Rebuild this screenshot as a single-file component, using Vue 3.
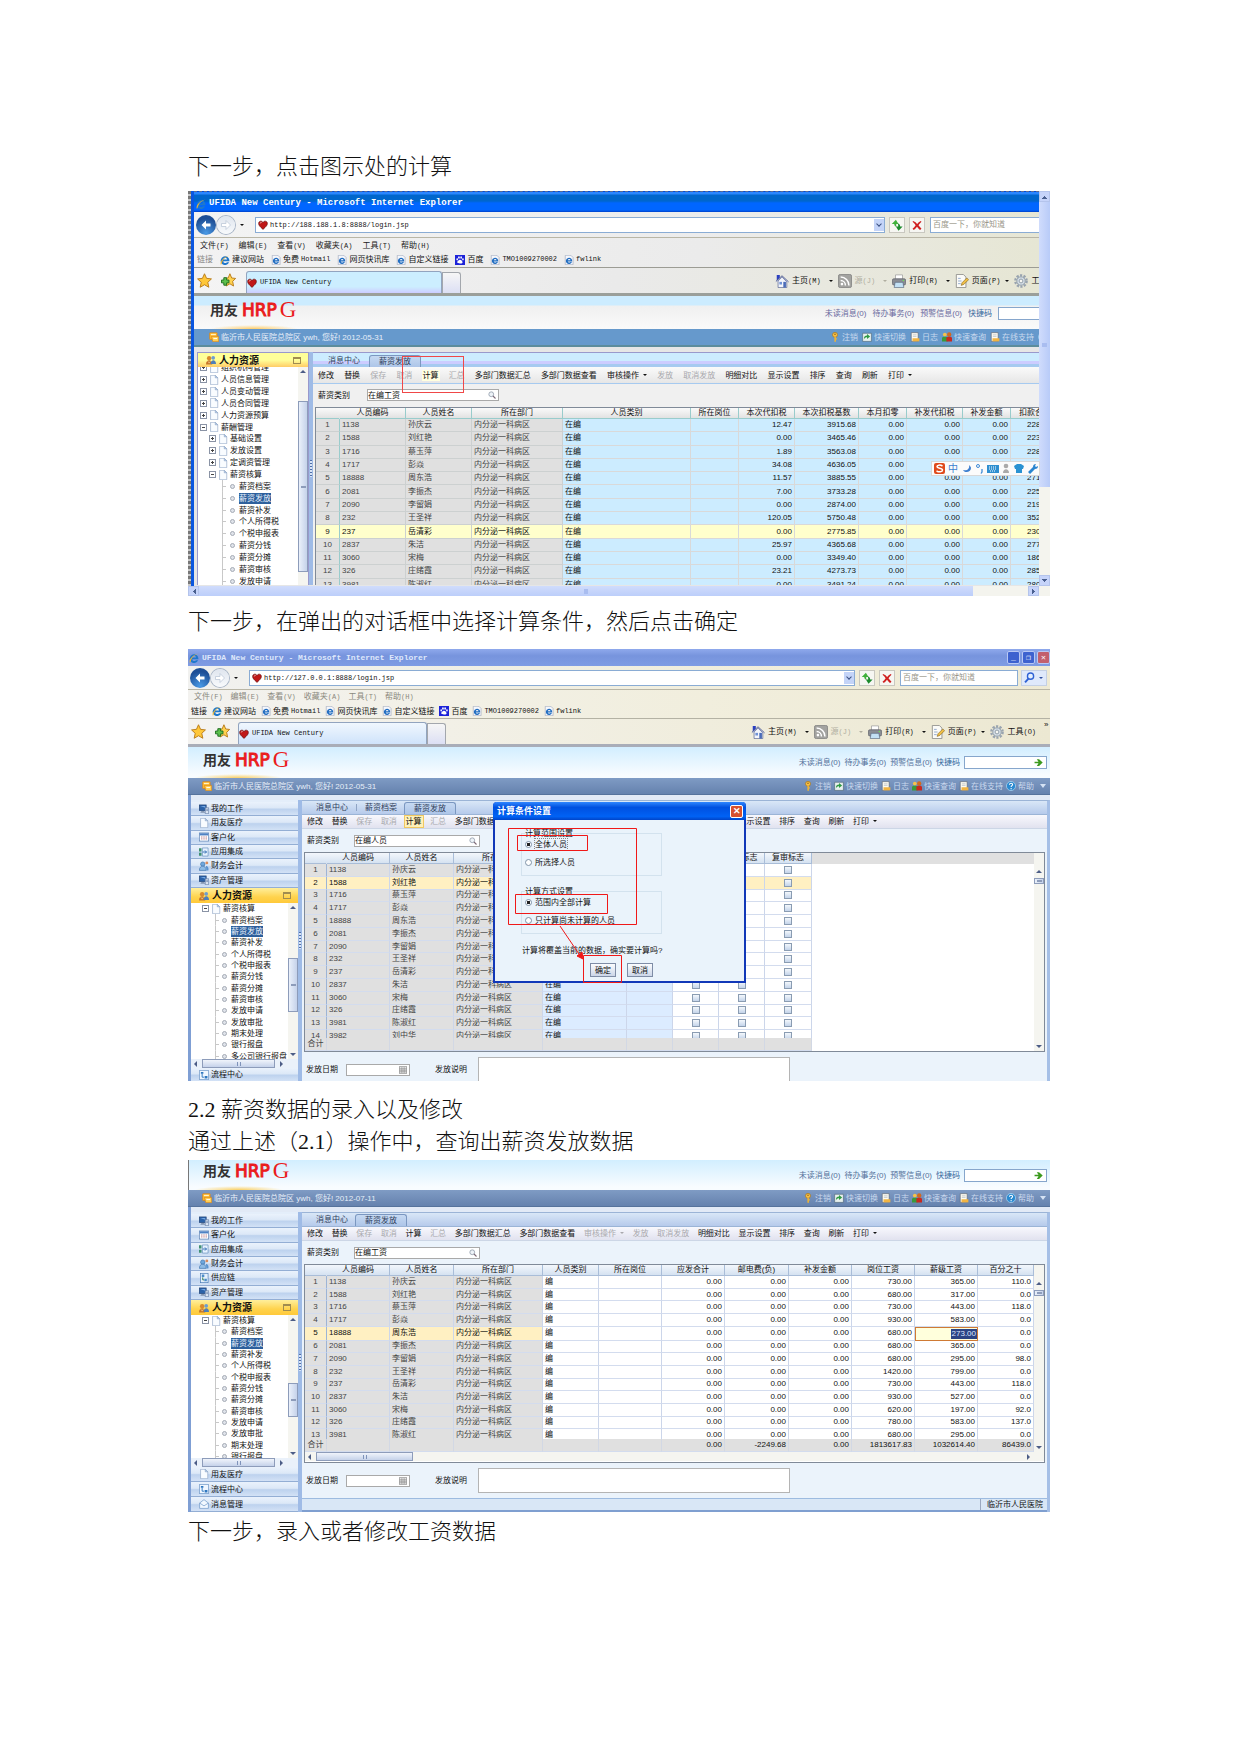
<script setup>
// Halaman panduan penggajian: teks langkah + tiga layar sistem HRP
const menus = [
  ["文件", "F"],
  ["编辑", "E"],
  ["查看", "V"],
  ["收藏夹", "A"],
  ["工具", "T"],
  ["帮助", "H"],
];
const favorites = [
  { icon: "ie", text: "建议网站" },
  { icon: "iepage", text: "免费", latin: "Hotmail" },
  { icon: "iepage", text: "网页快讯库" },
  { icon: "iepage", text: "自定义链接" },
  { icon: "paw", text: "百度" },
  { icon: "iepage", latin: "TMO1009270002" },
  { icon: "iepage", latin: "fwlink" },
];
const commands = [
  { icon: "home", text: "主页", key: "M" },
  { icon: "rss", text: "源", key: "J", off: true },
  { icon: "printer", text: "打印", key: "R" },
  { icon: "pageedit", text: "页面", key: "P", tight: true },
  { icon: "gear", text: "工具", key: "O", tight: true },
];
const statusLinks = [
  { icon: "key", text: "注销" },
  { icon: "switch", text: "快速切换" },
  { icon: "log", text: "日志" },
  { icon: "users", text: "快速查询" },
  { icon: "log", text: "在线支持" },
  { icon: "help", text: "帮助" },
];
const notices = ["未读消息(0)", "待办事务(0)", "预警信息(0)"];

const tools = (off, hot) =>
  [
    "修改", "替换", "保存", "取消", "计算", "汇总", "多部门数据汇总", "多部门数据查看",
    "审核操作", "发放", "取消发放", "明细对比", "显示设置", "排序", "查询", "刷新", "打印",
  ].map((text) => ({
    text,
    off: off.includes(text),
    hot: hot === text,
    drop: text === "审核操作" || text === "打印",
  }));

const people = [
  ["1138", "孙庆云"],
  ["1588", "刘红艳"],
  ["1716", "蔡玉萍"],
  ["1717", "彭焱"],
  ["18888", "周东浩"],
  ["2081", "李振杰"],
  ["2090", "李留娟"],
  ["232", "王圣祥"],
  ["237", "岳清彩"],
  ["2837", "朱洁"],
  ["3060", "宋梅"],
  ["326", "庄绪霞"],
  ["3981", "陈淑红"],
  ["3982", "刘中华"],
];
const makeRows = (n, extra) =>
  people.slice(0, n).map((p, i) => [String(i + 1), p[0], p[1], "内分泌一科病区", ...extra(i)]);

const col = (title, width, type = "text") => ({ title, width, type });

const tax = [
  ["12.47", "3915.68", "228"],
  ["0.00", "3465.46", "223"],
  ["1.89", "3563.08", "228"],
  ["34.08", "4636.05", "228"],
  ["11.57", "3885.55", "271"],
  ["7.00", "3733.28", "225"],
  ["0.00", "2874.00", "219"],
  ["120.05", "5750.48", "352"],
  ["0.00", "2775.85", "230"],
  ["25.97", "4365.68", "277"],
  ["0.00", "3349.40", "186"],
  ["23.21", "4273.73", "285"],
  ["0.00", "3491.24", "280"],
];
const pay = [
  ["730.00", "365.00", "110.0"],
  ["680.00", "317.00", "0.0"],
  ["730.00", "443.00", "118.0"],
  ["930.00", "583.00", "0.0"],
  ["680.00", "273.00", "0.0"],
  ["680.00", "365.00", "0.0"],
  ["680.00", "295.00", "98.0"],
  ["1420.00", "799.00", "0.0"],
  ["730.00", "443.00", "118.0"],
  ["930.00", "527.00", "0.0"],
  ["620.00", "197.00", "92.0"],
  ["780.00", "583.00", "137.0"],
  ["680.00", "295.00", "0.0"],
];

const leaves = [
  "薪资档案", "薪资发放", "薪资补发", "个人所得税", "个税申报表", "薪资分钱",
  "薪资分摊", "薪资审核", "发放申请", "发放审批", "期末处理", "银行报盘", "多公司银行报盘",
];
const leafNodes = (n) => leaves.slice(0, n).map((text) => ({ text, level: 3 }));

const shots = [
  {
    id: "classic",
    captions: ["下一步，点击图示处的计算"],
    browser: true,
    url: "http://188.188.1.8:8888/login.jsp",
    date: "2012-05-31",
    modules: [],
    bottomModules: [],
    tree: [
      { text: "组织机构管理", level: 1, sign: "+" },
      { text: "人员信息管理", level: 1, sign: "+" },
      { text: "人员变动管理", level: 1, sign: "+" },
      { text: "人员合同管理", level: 1, sign: "+" },
      { text: "人力资源预算", level: 1, sign: "+" },
      { text: "薪酬管理", level: 1, sign: "-" },
      { text: "基础设置", level: 2, sign: "+" },
      { text: "发放设置", level: 2, sign: "+" },
      { text: "定调资管理", level: 2, sign: "+" },
      { text: "薪资核算", level: 2, sign: "-" },
      ...leafNodes(9),
    ],
    thumb: { marginTop: "28px", height: "171px" },
    tabs: ["消息中心"],
    tools: tools(["保存", "取消", "汇总", "发放", "取消发放"], "计算"),
    filter: "在编工资",
    columns: [
      col("", 24, "no"), col("人员编码", 66, "fix"), col("人员姓名", 66, "fix"), col("所在部门", 91, "fix"),
      col("人员类别", 128), col("所在岗位", 48), col("本次代扣税", 56, "num"), col("本次扣税基数", 64, "num"),
      col("本月扣零", 48, "num"), col("补发代扣税", 56, "num"), col("补发金额", 48, "num"), col("扣款合计", 0, "cut"),
    ],
    rows: makeRows(13, (i) => ["在编", "", tax[i][0], tax[i][1], "0.00", "0.00", "0.00", tax[i][2]]),
    active: 8,
  },
  {
    id: "dialogued",
    captions: ["下一步，在弹出的对话框中选择计算条件，然后点击确定"],
    browser: true,
    url: "http://127.0.0.1:8888/login.jsp",
    date: "2012-05-31",
    modules: [
      ["pc", "我的工作"], ["doc", "用友医疗"], ["sheet", "客户化"],
      ["module", "应用集成"], ["money", "财务会计"], ["pc", "资产管理"],
    ],
    bottomModules: [["flow", "流程中心"]],
    tree: [{ text: "薪资核算", level: 2, sign: "-" }, ...leafNodes(13)],
    thumb: { marginTop: "49px", height: "54px" },
    tabs: ["消息中心", "薪资档案"],
    tools: tools(["保存", "取消", "汇总"], "计算"),
    filter: "在编人员",
    columns: [
      col("", 22, "no"), col("人员编码", 63, "fix"), col("人员姓名", 64, "fix"), col("所在部门", 89, "fix"),
      col("人员类别", 84, "blue"), col("所在岗位", 46, "blue"), col("发放标志", 46, "check"), col("审核标志", 46, "check"),
      col("复审标志", 47, "check"), col("", 0, "filler"),
    ],
    rows: makeRows(14, () => ["在编", "", "", "", "", ""]),
    active: 1,
    total: ["合计"],
    form: true,
    gridThumb: true,
    dialog: true,
  },
  {
    id: "editing",
    captions: ["2.2 薪资数据的录入以及修改", "通过上述（2.1）操作中，查询出薪资发放数据"],
    date: "2012-07-11",
    modules: [
      ["pc", "我的工作"], ["sheet", "客户化"], ["module", "应用集成"],
      ["money", "财务会计"], ["supply", "供应链"], ["pc", "资产管理"],
    ],
    bottomModules: [["doc", "用友医疗"], ["flow", "流程中心"], ["mail", "消息管理"]],
    tree: [{ text: "薪资核算", level: 2, sign: "-" }, ...leafNodes(12)],
    thumb: { marginTop: "62px", height: "34px" },
    tabs: ["消息中心"],
    tools: tools(["保存", "取消", "汇总", "审核操作", "发放", "取消发放"], ""),
    filter: "在编工资",
    columns: [
      col("", 22, "no"), col("人员编码", 63, "fix"), col("人员姓名", 64, "fix"), col("所在部门", 89, "fix"),
      col("人员类别", 56), col("所在岗位", 63), col("应发合计", 63, "num"), col("邮电费(负)", 64, "num"),
      col("补发金额", 63, "num"), col("岗位工资", 63, "num"), col("薪级工资", 63, "num"), col("百分之十", 0, "num"),
    ],
    rows: makeRows(13, (i) => ["编", "", "0.00", "0.00", "0.00", ...pay[i]]),
    active: 4,
    editCell: [4, 10],
    total: ["合计", "", "", "", "", "", "0.00", "-2249.68", "0.00", "1813617.83", "1032614.40", "86439.0"],
    form: true,
    gridThumb: true,
    hscroll: true,
    footer: "临沂市人民医院",
  },
];

const colStyle = (c) => (c.width ? { width: c.width + "px" } : {});
const isEdit = (shot, r, c) => shot.editCell && shot.editCell[0] === r && shot.editCell[1] === c;
</script>

<template>
  <svg class="sprite" aria-hidden="true">
    <symbol id="i-ie" viewBox="0 0 16 16">
      <path d="M15 10H5.200a3.200 3.200 0 0 0 5.800 1.600h3.600a7 7 0 1 1 .4-1.600zM5.300 7.200h6a3 3 0 0 0-6 0z" fill="#1f78cc" />
      <path d="M1.500 15.500C-1 12 5 3 15.500.8 13 1.500 6 4.500 3.200 11.500c-.7 1.700-.5 3-1.700 4z" fill="#f2b632" />
    </symbol>
    <symbol id="i-iepage" viewBox="0 0 16 16">
      <path d="M2 .5h9l3.500 3.500v11.500H2z" fill="#f4f6fb" stroke="#9aa4b8" />
      <path d="M13 10.200H6a2.600 2.600 0 0 0 4.400 1.100h2.300a5 5 0 1 1 .3-1.100zM6 8.200h4.500a2.300 2.300 0 0 0-4.500 0z" fill="#1f6cc0" />
    </symbol>
    <symbol id="i-heart" viewBox="0 0 16 16">
      <path d="M8 15C3 10.500 1 8.500 1 5.500 1 1.500 6 .5 8 4c2-3.500 7-2.500 7 1.500 0 3-2 5-7 9.500z" fill="#c01818" stroke="#5c0808" />
      <path d="M3.500 5.500c0-1.500 1.500-2 2.500-1.500" stroke="#fff" fill="none" />
    </symbol>
    <symbol id="i-paw" viewBox="0 0 16 16">
      <rect width="16" height="16" fill="#1c22d8" />
      <path d="M8 7.500c2 0 4.500 3 4 5s-6 1-8 0 2-5 4-5z" fill="#fff" />
      <ellipse cx="3.500" cy="7" rx="1.300" ry="1.800" fill="#fff" />
      <ellipse cx="6.300" cy="4" rx="1.300" ry="2" fill="#fff" />
      <ellipse cx="9.800" cy="4" rx="1.300" ry="2" fill="#fff" />
      <ellipse cx="12.700" cy="7" rx="1.300" ry="1.800" fill="#fff" />
    </symbol>
    <symbol id="i-star" viewBox="0 0 16 16">
      <path d="M8 .8l2.200 4.900 5.200.6-3.900 3.600 1.100 5.300L8 12.500l-4.600 2.700 1.100-5.300L.6 6.300l5.200-.6z" fill="#ffc739" stroke="#b97b18" />
    </symbol>
    <symbol id="i-staradd" viewBox="0 0 16 16">
      <path d="M9.500.8l1.900 4.500 4.200.5-3.200 3.100 1 5-3.900-2.400-4.100 2.400 1-5L3.200 5.800l4.400-.5z" fill="#ffd24f" stroke="#b97b18" />
      <path d="M3 5h3v2.500h2.500v3H6V13H3v-2.500H.5v-3H3z" fill="#5cc04c" stroke="#1e6e20" />
    </symbol>
    <symbol id="i-refresh" viewBox="0 0 16 16">
      <path d="M6.500 1L1 6.500h3.200C4.500 8.500 5.500 10 7.500 10 6.500 8.500 7 7.500 7 6.500h3z" fill="#3fb13a" />
      <path d="M10 15.500l5.500-5.500h-3.200c-.3-2.500-1.300-4-3.500-4 1 1.500.8 2.500.8 4H6.500z" fill="#1c8a2c" />
    </symbol>
    <symbol id="i-stop" viewBox="0 0 16 16">
      <path d="M3 2.500c2.500 1 4 2.500 5.200 4C9.500 5 11 3.500 13 2.500l1 1c-1.700 1.500-3 3-4 4.800 1.300 1.700 2.500 3.200 4 4.700L12 14.500c-1.500-1.200-2.800-2.600-4-4.200-1.200 1.600-2.500 3-4.200 4.200L2 13c1.700-1.500 3-3 4.200-4.800C5 6.500 3.600 5 2 3.800z" fill="#cf1f1f" />
    </symbol>
    <symbol id="i-home" viewBox="0 0 16 16">
      <path d="M2 1h3.500v4.500L2 8z" fill="#2b3fc0" />
      <path d="M1 8.500L8 2l7.500 7" fill="#cfd8f4" stroke="#4a5686" />
      <path d="M3.500 8L8 3.500 13.500 9v6.500h-10z" fill="#f3f5fb" stroke="#54618f" stroke-width=".8" />
      <rect x="5" y="9" width="3" height="3" fill="#6f92d6" />
      <rect x="9.500" y="9" width="3" height="6.500" fill="#4b6cb8" />
    </symbol>
    <symbol id="i-rss" viewBox="0 0 16 16">
      <rect x=".5" y=".5" width="15" height="15" rx="2" fill="#a3a3a0" stroke="#858583" />
      <circle cx="4.500" cy="11.500" r="1.500" fill="#fff" />
      <path d="M3 7.500a5.500 5.500 0 0 1 5.500 5.500M3 3.500a9.500 9.500 0 0 1 9.500 9.500" fill="none" stroke="#fff" stroke-width="1.700" />
    </symbol>
    <symbol id="i-printer" viewBox="0 0 16 16">
      <path d="M4 1h8v5H4z" fill="#fff" stroke="#999" stroke-width=".8" />
      <rect x=".5" y="5.500" width="15" height="7" rx="1.500" fill="#8a8d94" stroke="#5c5f67" stroke-width=".8" />
      <path d="M3.500 9.500h9l1 6h-11z" fill="#c2e0f4" stroke="#5a6a80" stroke-width=".8" />
      <circle cx="13" cy="7.500" r=".9" fill="#6ddc58" />
    </symbol>
    <symbol id="i-pageedit" viewBox="0 0 16 16">
      <path d="M1.500.5h8l3 3v12h-11z" fill="#fbfbf8" stroke="#8e8e8a" />
      <path d="M3.500 5h3M3.500 8h4M3.500 11h3" stroke="#8aa2c8" />
      <path d="M7 13l1-3 5.500-5.500 2 2L10 12z" fill="#f0bf45" stroke="#866420" stroke-width=".7" />
    </symbol>
    <symbol id="i-gear" viewBox="0 0 16 16">
      <circle cx="8" cy="8" r="6.500" fill="none" stroke="#98a3af" stroke-width="2.600" stroke-dasharray="2.500 1.600" />
      <circle cx="8" cy="8" r="4.800" fill="#d7e0e8" stroke="#8492a0" />
      <circle cx="8" cy="8" r="2.200" fill="#f7f7f2" stroke="#8492a0" />
    </symbol>
    <symbol id="i-note" viewBox="0 0 16 16">
      <rect x="1" y="1" width="12" height="11" rx="1" fill="#ffb92e" stroke="#d97f12" />
      <path d="M4 7h11.500v8.500H6z" fill="#ffcf56" stroke="#d97f12" />
      <path d="M3 4h8" stroke="#fff3c8" stroke-width="2" />
      <path d="M7 10.500h6" stroke="#fff" stroke-width="1.500" />
    </symbol>
    <symbol id="i-key" viewBox="0 0 16 16">
      <circle cx="8" cy="4.500" r="4" fill="#f7c148" stroke="#a36f12" />
      <circle cx="8" cy="3.500" r="1.200" fill="#8a5c10" />
      <path d="M7 8h2.500v2H11v2H9.500v3L8 16l-1-1z" fill="#eeb437" />
    </symbol>
    <symbol id="i-switch" viewBox="0 0 16 16">
      <path d="M1 2h14v13H1z" fill="#e9f1ee" stroke="#4c6474" />
      <path d="M3 12c0-5 2-6.500 5-6.500V3l5 4-5 4V8.500C6 8.500 4.500 9 3 12z" fill="#2f9a44" />
    </symbol>
    <symbol id="i-log" viewBox="0 0 16 16">
      <path d="M2 1h11v14H2z" fill="#fdfbf0" stroke="#5d6470" />
      <path d="M4.500 4.500h6M4.500 7h6" stroke="#a9b2bf" />
      <path d="M4 10h11v5H4z" fill="#f1b443" />
    </symbol>
    <symbol id="i-users" viewBox="0 0 16 16">
      <circle cx="4.500" cy="4" r="3" fill="#f7c24a" />
      <path d="M0 15V10c0-3 9-3 9 0v5z" fill="#3a9a3a" />
      <circle cx="11.500" cy="4" r="3.500" fill="#d2691e" />
      <path d="M7 15v-5c0-3 9-3 9 0v5z" fill="#c8281e" />
    </symbol>
    <symbol id="i-help" viewBox="0 0 16 16">
      <circle cx="8" cy="8" r="7.300" fill="#2b8ad0" stroke="#bfe3fa" />
      <path d="M5.500 6c0-3.500 5.500-3 5 0-.2 1.500-2.300 1.500-2.300 3.500" fill="none" stroke="#fff" stroke-width="1.700" />
      <circle cx="8.200" cy="12.200" r="1.100" fill="#fff" />
    </symbol>
    <symbol id="i-lens" viewBox="0 0 16 16">
      <circle cx="6.500" cy="6.500" r="4.800" fill="#eef3f8" stroke="#8b95a5" stroke-width="1.500" />
      <path d="M10 10l5 5" stroke="#7d6a78" stroke-width="2.200" />
    </symbol>
    <symbol id="i-bluelens" viewBox="0 0 16 16">
      <circle cx="9.500" cy="6" r="4.500" fill="#e4f0ff" stroke="#2f62d4" stroke-width="2" />
      <path d="M6.500 9.500L1.500 15" stroke="#2f62d4" stroke-width="2.800" />
    </symbol>
    <symbol id="i-doc" viewBox="0 0 16 16">
      <path d="M2.500.5h7.500l4 4v11H2.500z" fill="#f9fcff" stroke="#8ba2c3" />
      <path d="M10 .5v4h4z" fill="#bcd2ee" stroke="#8ba2c3" />
    </symbol>
    <symbol id="i-sheet" viewBox="0 0 16 16">
      <rect x=".5" y="1.500" width="15" height="13" fill="#fff" stroke="#4f77ad" />
      <path d="M1 2h14v3.500H1z" fill="#4f82c4" />
      <path d="M4.500 7v6M8 7v6M11.500 7v6" stroke="#b06a76" stroke-width="1.500" stroke-dasharray="2 1" />
    </symbol>
    <symbol id="i-pc" viewBox="0 0 16 16">
      <rect x=".5" y="1.500" width="11" height="9" fill="#2b62a8" stroke="#1c3d70" />
      <path d="M2 3h8v3z" fill="#74a8e4" />
      <path d="M4 11h4l2 3H2z" fill="#8496b0" />
      <path d="M10 6h5.500v9.500H10z" fill="#dce6f3" stroke="#57709a" />
      <path d="M11.500 8.500h3M11.500 10.500h3" stroke="#57709a" />
    </symbol>
    <symbol id="i-module" viewBox="0 0 16 16">
      <path d="M5.500 1.500h9v13h-9z" fill="#e6f2ff" stroke="#5d88b8" />
      <path d="M0 2h4v5H0zM0 9h4v5H0z" fill="#3f8f72" />
      <path d="M6 8h6M9.500 5.500L12 8l-2.500 2.500" stroke="#2d6ab0" fill="none" stroke-width="1.500" />
    </symbol>
    <symbol id="i-money" viewBox="0 0 16 16">
      <circle cx="6" cy="5" r="3.500" fill="#6fa7dc" stroke="#3c70a8" />
      <path d="M.5 15c0-9 11-9 11 0z" fill="#8dbbe6" stroke="#3c70a8" />
      <circle cx="12.500" cy="3" r="2.300" fill="#d98b5c" />
      <path d="M11 8c3-1 5 3 4 7h-3z" fill="#5a93cf" />
    </symbol>
    <symbol id="i-staff" viewBox="0 0 16 16">
      <circle cx="5" cy="5" r="3.500" fill="#d98a2c" />
      <path d="M0 15c0-9 10-9 10 0z" fill="#c67428" />
      <circle cx="11.500" cy="4.500" r="3" fill="#6d9dd0" />
      <path d="M7.500 14.500c0-8 8.500-8 8.500 0z" fill="#4f7fb8" />
      <path d="M3 10l2 3 2-3" stroke="#f6dca0" fill="none" />
    </symbol>
    <symbol id="i-supply" viewBox="0 0 16 16">
      <rect x="2.500" y=".5" width="12" height="15" fill="#e4f0fc" stroke="#3f74b0" />
      <path d="M4.500 2.500h4v4h-4zM8.500 9h4v4h-4z" fill="#4c8cc8" />
      <path d="M6 7v4h2" stroke="#2e7a4c" fill="none" stroke-width="1.500" />
    </symbol>
    <symbol id="i-flow" viewBox="0 0 16 16">
      <rect x=".5" y=".5" width="15" height="15" rx="1" fill="#f0f7ff" stroke="#3f74b0" />
      <path d="M3 3h4v3H3zM9 9.500h4.500v4H9z" fill="#2f78c0" />
      <path d="M5 6v5.500h3" stroke="#2f78c0" fill="none" stroke-width="1.500" />
    </symbol>
    <symbol id="i-mail" viewBox="0 0 16 16">
      <path d="M1 6.500L8 1l7 5.500V15H1z" fill="#f2f8ff" stroke="#5e8cc0" />
      <path d="M1 6.500L8 11l7-4.500" fill="none" stroke="#5e8cc0" />
    </symbol>
    <symbol id="i-calendar" viewBox="0 0 16 16">
      <rect x=".5" y="1.500" width="15" height="13" fill="#f4f4f4" stroke="#666" />
      <path d="M1 5.500h14M1 8.500h14M1 11.500h14M4.500 2v12M8 2v12M11.500 2v12" stroke="#777" />
    </symbol>
    <symbol id="i-go" viewBox="0 0 16 16">
      <path d="M1 6.500h7L5 2h4l6.500 6L9 14H5l3-4.500H1z" fill="#3c9a1e" />
    </symbol>
  </svg>

  <article class="page">
    <template v-for="shot in shots" :key="shot.id">
      <p v-for="line in shot.captions" :key="line" class="caption">{{ line }}</p>

      <section class="shot" :class="shot.id">
        <div class="window">
          <template v-if="shot.browser">
            <header class="titlebar">
              <svg class="ic"><use href="#i-ie" /></svg>
              <span class="title">UFIDA New Century - Microsoft Internet Explorer</span>
              <span v-if="shot.id === 'dialogued'" class="winbtns">
                <button type="button" aria-label="最小化">_</button>
                <button type="button" aria-label="还原">❐</button>
                <button type="button" class="close" aria-label="关闭">✕</button>
              </span>
            </header>

            <div class="address">
              <button type="button" class="nav back" aria-label="后退">
                <svg viewBox="0 0 16 16"><path d="M8 2L2 8l6 6v-4h6V6H8z" fill="#fff" /></svg>
              </button>
              <button type="button" class="nav fwd" aria-label="前进">
                <svg viewBox="0 0 16 16"><path d="M8 2l6 6-6 6v-4H2V6h6z" fill="#fff" stroke="#b9c5d6" /></svg>
              </button>
              <span class="caret"></span>
              <div class="urlbox">
                <svg class="ic"><use href="#i-heart" /></svg>
                <input type="text" aria-label="地址" :value="shot.url" />
                <button type="button" class="drop" aria-label="展开"><span class="chev"></span></button>
              </div>
              <button type="button" class="sq" aria-label="刷新"><svg><use href="#i-refresh" /></svg></button>
              <button type="button" class="sq" aria-label="停止"><svg><use href="#i-stop" /></svg></button>
              <input class="search" type="text" aria-label="搜索" placeholder="百度一下，你就知道" />
              <span v-if="shot.id === 'dialogued'" class="searchbtns">
                <button type="button" aria-label="搜索"><svg><use href="#i-bluelens" /></svg></button>
                <button type="button" aria-label="搜索选项"><span class="caret"></span></button>
              </span>
            </div>

            <nav class="menus">
              <a v-for="m in menus" :key="m[0]" href="#">{{ m[0] }}<span class="mono">({{ m[1] }})</span></a>
            </nav>
            <nav class="favs">
              <span class="favlabel">链接</span>
              <a v-for="f in favorites" :key="f.text + f.latin" href="#">
                <svg class="ic"><use :href="'#i-' + f.icon" /></svg>
                <span v-if="f.text">{{ f.text }}</span>
                <span v-if="f.latin" class="mono">{{ f.latin }}</span>
              </a>
            </nav>

            <div class="tabrow">
              <svg class="star"><use href="#i-star" /></svg>
              <svg class="star"><use href="#i-staradd" /></svg>
              <div class="ietab">
                <svg class="ic"><use href="#i-heart" /></svg>
                <span class="mono">UFIDA New Century</span>
              </div>
              <div class="newtab"></div>
              <div class="cmds">
                <a v-for="c in commands" :key="c.icon" href="#" :class="{ off: c.off, tight: c.tight }">
                  <svg class="cmdic"><use :href="'#i-' + c.icon" /></svg>
                  <span>{{ c.text }}<span class="mono">({{ c.key }})</span></span>
                  <span class="caret"></span>
                </a>
              </div>
              <span v-if="shot.id === 'dialogued'" class="more">»</span>
            </div>
          </template>

          <div class="brand">
            <div class="logo"><b>用友</b><span class="hrp">HRP</span><span class="g">G</span></div>
            <nav class="notices">
              <a v-for="n in notices" :key="n" href="#">{{ n }}</a>
              <label :for="shot.id + '-code'">快捷码</label>
              <span class="codebox">
                <input :id="shot.id + '-code'" type="text" />
                <svg v-if="shot.id !== 'classic'"><use href="#i-go" /></svg>
              </span>
            </nav>
          </div>

          <div class="status">
            <svg class="ic"><use href="#i-note" /></svg>
            <span>临沂市人民医院总院区 ywh, 您好! {{ shot.date }}</span>
            <nav class="links">
              <a v-for="s in statusLinks" :key="s.text" href="#">
                <svg class="ic"><use :href="'#i-' + s.icon" /></svg>{{ s.text }}
              </a>
              <span class="tri"></span>
            </nav>
          </div>

          <div class="body">
            <aside class="side">
              <div v-if="shot.modules.length" class="modules">
                <a v-for="m in shot.modules" :key="m[1]" href="#" class="module">
                  <svg class="ic"><use :href="'#i-' + m[0]" /></svg>{{ m[1] }}
                </a>
              </div>
              <div class="hr">
                <svg class="ic"><use href="#i-staff" /></svg>
                <b>人力资源</b>
                <span class="winicon"></span>
              </div>
              <div class="treebox">
                <ul class="tree">
                  <li v-for="(t, i) in shot.tree" :key="i" :class="'l' + t.level">
                    <template v-if="t.sign">
                      <span class="sign" :class="{ plus: t.sign === '+' }"></span>
                      <svg class="ic"><use href="#i-doc" /></svg>
                    </template>
                    <i v-else class="dot"></i>
                    <span class="node" :class="{ sel: t.text === '薪资发放' }">{{ t.text }}</span>
                  </li>
                </ul>
                <div class="vs">
                  <i class="up"></i>
                  <span class="thumb" :style="shot.thumb"></span>
                  <i v-if="shot.modules.length" class="down"></i>
                </div>
              </div>
              <div v-if="shot.modules.length" class="hs">
                <i class="left"></i><span class="hthumb"></span><i class="right"></i>
              </div>
              <a v-for="m in shot.bottomModules" :key="m[1]" href="#" class="module low">
                <svg class="ic"><use :href="'#i-' + m[0]" /></svg>{{ m[1] }}
              </a>
            </aside>
            <div class="split"><i></i></div>

            <main class="panel">
              <div class="tabs">
                <template v-for="(t, i) in shot.tabs" :key="t">
                  <span v-if="i" class="bar"></span>
                  <a href="#">{{ t }}</a>
                </template>
                <a href="#" class="on">薪资发放</a>
              </div>
              <div class="toolbar">
                <div class="toolset">
                  <button
                    v-for="t in shot.tools"
                    :key="t.text"
                    type="button"
                    :class="{ off: t.off, hot: t.hot }"
                  >{{ t.text }}<span v-if="t.drop" class="caret"></span></button>
                </div>
              </div>
              <div class="filter">
                <label :for="shot.id + '-cat'">薪资类别</label>
                <span class="lookup">
                  <input :id="shot.id + '-cat'" type="text" :value="shot.filter" />
                  <svg><use href="#i-lens" /></svg>
                </span>
              </div>

              <div class="grid">
                <div class="gridrow">
                  <div class="gridcol">
                    <div class="view">
                      <table class="data">
                        <colgroup><col v-for="(c, i) in shot.columns" :key="i" :style="colStyle(c)" /></colgroup>
                        <thead>
                          <tr>
                            <th v-for="(c, i) in shot.columns" :key="i" :class="c.type">{{ c.title }}</th>
                          </tr>
                        </thead>
                        <tbody>
                          <tr v-for="(r, ri) in shot.rows" :key="ri" :class="{ active: ri === shot.active }">
                            <td
                              v-for="(c, ci) in shot.columns"
                              :key="ci"
                              :class="[c.type, { edit: isEdit(shot, ri, ci) }]"
                            >
                              <input v-if="c.type === 'check'" type="checkbox" :aria-label="c.title" />
                              <mark v-else-if="isEdit(shot, ri, ci)">{{ r[ci] }}</mark>
                              <template v-else>{{ r[ci] }}</template>
                            </td>
                          </tr>
                        </tbody>
                      </table>
                    </div>
                    <table v-if="shot.total" class="data total">
                      <colgroup><col v-for="(c, i) in shot.columns" :key="i" :style="colStyle(c)" /></colgroup>
                      <tbody>
                        <tr>
                          <td v-for="(c, i) in shot.columns" :key="i" :class="c.type">{{ shot.total[i] }}</td>
                        </tr>
                      </tbody>
                    </table>
                  </div>
                  <div v-if="shot.gridThumb" class="vs gvs"><i class="up"></i><span class="thumb"></span><i class="down"></i></div>
                </div>
                <div v-if="shot.hscroll" class="hs ghs"><i class="left"></i><span class="hthumb"></span><i class="right"></i></div>
              </div>

              <div v-if="shot.form" class="form">
                <label :for="shot.id + '-date'">发放日期</label>
                <span class="datebox">
                  <input :id="shot.id + '-date'" type="text" />
                  <svg><use href="#i-calendar" /></svg>
                </span>
                <label :for="shot.id + '-memo'">发放说明</label>
                <textarea :id="shot.id + '-memo'"></textarea>
              </div>
              <footer v-if="shot.footer" class="foot"><span>{{ shot.footer }}</span></footer>
            </main>
          </div>
        </div>

        <template v-if="shot.id === 'classic'">
          <div class="outer-v"><i></i><span></span><i class="dn"></i></div>
          <div class="outer-h"><i></i><span></span><i class="rt"></i></div>
          <div class="mark"></div>
          <div class="ime">
            <svg viewBox="0 0 107 13">
              <rect x="2" y="1" width="11" height="11" rx="2" fill="#e04a1c" />
              <path d="M10.500 4C8 2.500 5 3 5 4.700s5.500 1.300 5.500 3.300-3.500 2.500-6 .8" fill="none" stroke="#fff" stroke-width="1.500" />
              <path d="M37 3c1 4-2 6-6 5 1 3 8 3 8-2 0-1-1-2-2-3z" fill="#3d7fd0" />
              <circle cx="46" cy="4" r="1.500" fill="none" stroke="#3d8ad6" />
              <path d="M50 7v3l-1 1.500" stroke="#3d8ad6" fill="none" stroke-width="1.300" />
              <rect x="55" y="3" width="12" height="8" fill="#2f8fd0" />
              <path d="M57 5h8M57 7h8M58 9h6" stroke="#fff" stroke-dasharray="1 1" />
              <circle cx="74" cy="4" r="2.300" fill="#aaa" />
              <path d="M71 11c0-5 6-5 6 0z" fill="#aaa" />
              <path d="M82 4l3-2h4l3 2-1 3h-1v4h-6V7h-1z" fill="#2a92d2" />
              <path d="M96 10l5-5c0-2 1-3 3-3l-1 2 1 1 2-1c0 2-1 3-3 3l-5 5z" fill="#2a86d0" />
            </svg>
            <span>中</span>
          </div>
        </template>

        <div v-if="shot.dialog" class="dialog" role="dialog" aria-label="计算条件设置">
          <div class="dlg-title">计算条件设置<button type="button" aria-label="关闭">✕</button></div>
          <div class="dlg-body">
            <fieldset>
              <legend>计算范围设置</legend>
              <label><input type="radio" name="scope" checked /><span class="focus">全体人员</span></label>
              <label><input type="radio" name="scope" />所选择人员</label>
            </fieldset>
            <fieldset>
              <legend>计算方式设置</legend>
              <label><input type="radio" name="mode" checked />范围内全部计算</label>
              <label><input type="radio" name="mode" />只计算尚未计算的人员</label>
            </fieldset>
            <p>计算将覆盖当前的数据，确实要计算吗?</p>
            <div class="dlg-btns">
              <button type="button">确定</button>
              <button type="button">取消</button>
            </div>
          </div>
          <svg class="annot" viewBox="0 0 253 181" fill="none" stroke="#f01818">
            <path d="M15.500 26.500h128v96h-128z" />
            <path d="M24.500 33.500h70v15h-70z" />
            <path d="M22.500 92.500h92v19h-92z" />
            <path d="M90.500 153.500h38v27h-38z" />
            <path d="M67 124l19 28" />
            <path d="M90 157l-6-3 5-4z" fill="#f01818" />
          </svg>
        </div>
      </section>
    </template>
    <p class="caption">下一步，录入或者修改工资数据</p>
  </article>
</template>

<style>
body {
  margin: 0;
  background: #fff;
}
</style>

<style scoped>
.sprite {
  position: absolute;
  width: 0;
  height: 0;
}
.page {
  padding: 151px 191px 120px 188px;
}
.caption {
  margin: 0;
  font-family: "Liberation Serif", "Noto Sans CJK SC", serif;
  font-size: 22px;
  font-weight: 300;
  line-height: 32px;
  color: #111;
  white-space: nowrap;
}
.shot {
  position: relative;
  margin: 11px 0 13px;
  overflow: hidden;
  font-family: "Liberation Sans", "Noto Sans CJK SC", sans-serif;
  font-size: 8px;
  line-height: 11px;
  color: #111;
  white-space: nowrap;
}
.shot.classic {
  display: grid;
  grid-template-columns: minmax(0, 1fr) 11px;
  grid-template-rows: 395px 10px;
  margin: 8px 0 10px;
}
.shot.editing {
  margin: 2px 0 4px;
}
.shot a {
  color: inherit;
  text-decoration: none;
}
.shot button,
.shot input,
.shot textarea {
  font: inherit;
  color: inherit;
  margin: 0;
  padding: 0;
  border: 0;
  background: none;
  border-radius: 0;
  min-width: 0;
}
.mono {
  font-family: "Liberation Mono", monospace;
  font-size: 7px;
}
.ic {
  width: 10px;
  height: 10px;
  flex: none;
}
.caret {
  display: inline-block;
  flex: none;
  border: 2px solid transparent;
  border-top-color: currentColor;
  border-bottom: 0;
}
.window {
  overflow: hidden;
  display: flex;
  flex-direction: column;
}
.classic .window {
  border-left: 3px solid #0a56e0;
  margin-left: 3px;
  position: relative;
}
.classic::before {
  content: "";
  position: absolute;
  left: 0;
  top: 0;
  width: 3px;
  height: 395px;
  background: repeating-linear-gradient(#777 0 3px, #c8c8c8 3px 5px);
}
.dialogued .window {
  height: 432px;
}
.editing .window {
  height: 352px;
}

/* jendela browser */
.titlebar {
  display: flex;
  align-items: center;
  gap: 3px;
  height: 17px;
  flex: none;
  padding-left: 1px;
  background: linear-gradient(#8fa9ec, #7794dd 40%, #7f9ce4);
  color: #dfe8fb;
  font-family: "Liberation Mono", monospace;
  font-weight: 700;
}
.classic .titlebar {
  height: 17px;
  border-top: 1px dashed #5c6c90;
  padding: 3px 0 0 2px;
  background: linear-gradient(#2a86ff 0 2px, #0066cc 3px 9px, #0066ff 11px 18px, #0040c8);
  color: #fff;
  font-size: 9px;
}
.title {
  flex: 1;
}
.winbtns {
  display: flex;
  gap: 2px;
}
.shot .winbtns button {
  width: 13px;
  height: 13px;
  border: 1px solid #b8c8f4;
  border-radius: 2px;
  background: #3d62cf;
  color: #fff;
  font-size: 8px;
  line-height: 10px;
}
.shot .winbtns .close {
  background: #c2606e;
}
.address {
  display: flex;
  align-items: center;
  height: 23px;
  flex: none;
  border-bottom: 1px solid #b9b6a6;
  background: linear-gradient(90deg, #f1f1ef, #f1eedd 60%, #eeead4);
}
.classic .address {
  height: 25px;
  background: linear-gradient(90deg, #f3f3f3, #ececec 60%, #e6e6d4);
}
.nav {
  flex: none;
  display: flex;
  align-items: center;
  justify-content: center;
  border-radius: 50% !important;
}
.nav svg {
  width: 12px;
  height: 12px;
}
.back {
  width: 20px;
  height: 20px;
  margin: 0 1px 0 2px !important;
  background: radial-gradient(circle at 50% 90%, #4a9ae6, #1e4f96 70%) !important;
}
.fwd {
  width: 18px;
  height: 18px;
  background: linear-gradient(#dfe5ee, #f8fafc) !important;
  box-shadow: 0 0 0 1px #a9b6c8;
}
.address > .caret {
  margin: 0 11px 0 5px;
}
.urlbox {
  flex: 1;
  display: flex;
  align-items: center;
  height: 14px;
  gap: 2px;
  padding-left: 2px;
  border: 1px solid #8aacd4;
  background: #fff;
}
.urlbox input {
  flex: 1;
  font-family: "Liberation Mono", monospace;
  font-size: 7px;
  height: 12px;
}
.drop {
  width: 10px;
  height: 12px;
  background: #c4d4f8 !important;
}
.chev {
  display: block;
  width: 3px;
  height: 3px;
  margin: 0 auto 2px;
  border: solid #3a4f80;
  border-width: 0 1px 1px 0;
  transform: rotate(45deg);
}
.sq {
  flex: none;
  width: 16px;
  height: 16px;
  margin-left: 4px !important;
  border: 1px solid #c9c8c0 !important;
  background: #f6f6f2 !important;
}
.sq svg {
  display: block;
  width: 12px;
  height: 12px;
  margin: 1px;
}
.search {
  width: 114px;
  height: 14px;
  margin-left: 5px !important;
  padding-left: 2px !important;
  border: 1px solid #8aacd4 !important;
  background: #fff !important;
}
.classic .search {
  width: 106px;
  border-right: 0 !important;
}
.search::placeholder {
  color: #9a978a;
  opacity: 1;
}
.searchbtns {
  display: flex;
  margin: 0 3px 0 3px;
  border: 1px solid #c4d0e4;
  background: #dfe9fb;
  color: #3050a0;
}
.searchbtns button {
  width: 14px;
  height: 14px;
  display: flex;
  align-items: center;
  justify-content: center;
}
.searchbtns button + button {
  width: 10px;
}
.searchbtns svg {
  width: 11px;
  height: 11px;
}
.menus {
  display: flex;
  align-items: center;
  gap: 8px;
  height: 14px;
  flex: none;
  padding-left: 6px;
  color: #8a897e;
  background: linear-gradient(90deg, #f3f2ef, #f1eedd 60%, #eeead4);
}
.classic .menus {
  gap: 10px;
  height: 16px;
  color: #222;
  background: linear-gradient(90deg, #f2f2f2, #ebebeb 60%, #e6e6d4);
}
.favs {
  display: flex;
  align-items: center;
  height: 14px;
  flex: none;
  gap: 5px;
  padding-left: 3px;
  border-bottom: 1px solid #b4b2a4;
  background: linear-gradient(90deg, #f3f2ef, #f1eedd 60%, #eeead4);
}
.classic .favs {
  height: 11px;
  padding-bottom: 2px;
  gap: 7px;
  border-color: #9c9c94;
  background: linear-gradient(90deg, #f2f2f2, #ebebeb 60%, #e6e6d4);
}
.classic .favlabel {
  color: #888;
}
.favs a {
  display: flex;
  align-items: center;
  gap: 2px;
}
.tabrow {
  display: flex;
  align-items: center;
  height: 25px;
  flex: none;
  overflow: hidden;
  border-bottom: 3px solid #a9adb8;
  background: linear-gradient(90deg, #f4f3f1, #f0eddd 60%, #ece8d2);
}
.classic .tabrow {
  background: linear-gradient(90deg, #f4f4f4, #eaeaea 50%, #e6e6d4);
  border-color: #9b9f9a;
}
.star {
  flex: none;
  width: 15px;
  height: 15px;
  margin-left: 3px;
  margin-right: 6px;
}
.ietab {
  align-self: flex-end;
  display: flex;
  align-items: center;
  gap: 3px;
  width: 187px;
  height: 21px;
  margin-left: 2px;
  border: 1px solid #92a4bf;
  border-bottom: 0;
  border-radius: 3px 3px 0 0;
  background: linear-gradient(#f0f7fe, #cfe3fb);
}
.classic .ietab {
  width: 194px;
  margin-left: 4px;
  background: linear-gradient(#cceeff 70%, #ccccff);
}
.newtab {
  align-self: flex-end;
  width: 17px;
  height: 20px;
  border: 1px solid #a3a7ad;
  border-bottom: 0;
  border-radius: 0 3px 0 0;
  background: linear-gradient(#f6f6f6, #dcdff4);
}
.cmds {
  flex: 0 0 290px;
  margin-left: auto;
  overflow: hidden;
  display: flex;
  gap: 5px;
}
.classic .cmds {
  flex-basis: 264px;
}
.cmds a {
  flex: none;
  display: flex;
  align-items: center;
  gap: 3px;
}
.cmds .caret {
  margin-left: 5px;
}
.cmds .tight .caret {
  margin-left: 2px;
}
.cmds .off {
  color: #b0aea0;
}
.cmdic {
  width: 14px;
  height: 14px;
}
.more {
  align-self: flex-start;
  width: 6px;
  margin-left: 3px;
}

/* kepala aplikasi */
.brand {
  display: flex;
  justify-content: space-between;
  height: 31px;
  flex: none;
  padding: 0 3px 0 15px;
  background:
    radial-gradient(ellipse 44px 4px at 50px 100%, #f9cf62, transparent),
    linear-gradient(#d2eeff, #f8fcff 90%);
}
.editing .brand {
  height: 30px;
  border-left: 1px solid #777;
  padding-left: 14px;
}
.classic .brand {
  height: 33px;
  padding: 0 0 0 16px;
  background:
    radial-gradient(ellipse 44px 4px at 60px 100%, #ffcc66, transparent),
    linear-gradient(#ccecff 0 9px, #f0f0f0 10px, #fafafa);
}
.logo {
  display: flex;
  align-items: center;
  height: 25px;
  line-height: 20px;
}
.editing .logo {
  height: 22px;
}
.classic .logo {
  height: 27px;
}
.logo b {
  font-size: 14px;
  color: #333;
}
.hrp {
  margin: 0 3px 0 4px;
  font-family: "DejaVu Sans", sans-serif;
  font-size: 17px;
  color: #ea1c1c;
  -webkit-text-stroke: 1px #ea1c1c;
}
.g {
  font-family: "Liberation Serif", serif;
  font-size: 23px;
  color: #ea1c1c;
}
.notices {
  display: flex;
  align-items: center;
  align-self: flex-start;
  height: 30px;
  gap: 4px;
  color: #54719a;
}
.classic .notices {
  height: 34px;
  gap: 6px;
  color: #6a6aa0;
}
.notices label {
  color: #36679c;
}
.codebox {
  display: flex;
  align-items: center;
  width: 78px;
  height: 11px;
  padding-right: 3px;
  border: 1px solid #86a6cc;
  background: #fff;
}
.classic .codebox {
  width: 40px;
  padding: 0;
  border-right: 0;
}
.codebox input {
  flex: 1;
}
.codebox svg {
  width: 9px;
  height: 9px;
}
.status {
  display: flex;
  align-items: center;
  gap: 2px;
  height: 16px;
  flex: none;
  padding-left: 14px;
  overflow: hidden;
  border-bottom: 1px solid #56739c;
  background: linear-gradient(#7f9bc4, #6582ae);
  color: #e6eef8;
}
.classic .status {
  height: 16px;
  padding-left: 15px;
  border-bottom: 2px solid #5c8c9c;
  background: #6699cc;
}
.links {
  display: flex;
  align-items: center;
  gap: 3px;
  flex: 0 0 247px;
  margin-left: auto;
  color: #c9d9ee;
}
.classic .links {
  flex-basis: 209px;
  gap: 4px;
  overflow: hidden;
}
.links a {
  display: flex;
  align-items: center;
  flex: none;
  gap: 2px;
}
.tri {
  border: 3px solid transparent;
  border-top: 4px solid #d5e2f4;
  border-bottom: 0;
  margin-left: 3px;
}

/* isi: menu kiri + panel */
.body {
  flex: 1;
  min-height: 0;
  display: flex;
  padding: 5px 0 0 3px;
  background: linear-gradient(90deg, #7f9fd4 0 3px, #e2eaf6 3px);
}
.classic .body {
  padding-bottom: 1px;
  background: #e6e6e6;
}
.side {
  width: 107px;
  flex: none;
  display: flex;
  flex-direction: column;
  overflow: hidden;
  background: #e4eefa;
}
.classic .side {
  width: 110px;
  border: 1px solid #9999cc;
  border-bottom: 0;
}
.modules {
  flex: none;
  height: 86px;
  padding-top: 2px;
  display: flex;
  flex-direction: column;
}
.module {
  flex: 1;
  display: flex;
  align-items: center;
  gap: 2px;
  padding-left: 8px;
  border-bottom: 1px solid #93aed4;
  background: linear-gradient(#eaf2fc, #dce8f7 45%, #bdd2ee 55%, #d3e2f6);
}
.module.low {
  flex: 0 0 14px;
}
.dialogued .module.low {
  flex-basis: 13px;
  border-bottom: 0;
}
.hr {
  flex: none;
  display: flex;
  align-items: center;
  gap: 3px;
  height: 15px;
  padding-left: 8px;
  background: linear-gradient(#ffef9c, #ffd34d 60%, #ffc93a);
  font-size: 10px;
}
.classic .hr {
  height: 14px;
  background: linear-gradient(#ffff99 50%, #ffcc66);
}
.winicon {
  width: 6px;
  height: 4px;
  margin-left: auto;
  margin-right: 7px;
  border: 1px solid #a08c50;
  border-top-width: 2px;
}
.treebox {
  flex: 1;
  min-height: 0;
  display: flex;
  overflow: hidden;
  background: #fff;
}
.tree {
  flex: 1;
  min-width: 0;
  margin: 0;
  padding: 0;
  list-style: none;
  display: flex;
  flex-direction: column;
  height: 159px;
}
.editing .tree {
  height: 147px;
}
.classic .tree {
  height: 225px;
  margin-top: -5px;
}
.tree li {
  flex: 1;
  display: flex;
  align-items: center;
  min-height: 0;
}
.tree .l1 {
  padding-left: 2px;
}
.tree .l2 {
  padding-left: 11px;
}
.tree .l3 {
  position: relative;
  padding-left: 31px;
}
.classic .tree .l3 {
  padding-left: 32px;
}
.l3::before {
  content: "";
  position: absolute;
  left: 24px;
  top: 0;
  bottom: 0;
  width: 4px;
  background:
    linear-gradient(#c8c8c8, #c8c8c8) left / 1px 100% no-repeat,
    linear-gradient(#c8c8c8, #c8c8c8) center / 4px 1px no-repeat;
}
.sign {
  flex: none;
  width: 5px;
  height: 5px;
  margin-right: 2px;
  border: 1px solid #8a93a5;
  background: linear-gradient(#444, #444) center / 3px 1px no-repeat;
}
.sign.plus {
  background:
    linear-gradient(#444, #444) center / 3px 1px no-repeat,
    linear-gradient(#444, #444) center / 1px 3px no-repeat;
}
.tree .ic {
  margin-right: 2px;
}
.dot {
  flex: none;
  width: 3px;
  height: 3px;
  margin-right: 4px;
  border: 1px solid #a5abb5;
  border-radius: 50%;
  background: #dfe3ea;
}
.node.sel {
  background: #2d5f9c;
  color: #e7f0fb;
}
.vs {
  flex: none;
  width: 10px;
  display: flex;
  flex-direction: column;
  align-items: center;
  background: #f5f5f0;
}
.up,
.down,
.left,
.right {
  flex: none;
  border: 3px solid transparent;
}
.up {
  margin-top: 3px;
  border-top: 0;
  border-bottom-color: #4c5d86;
}
.down {
  margin: auto 0 3px;
  border-bottom: 0;
  border-top-color: #4c5d86;
}
.thumb {
  flex: none;
  box-sizing: border-box;
  width: 10px;
  border: 1px solid #8d9cba;
  background:
    linear-gradient(#8d9cba, #8d9cba) center / 5px 2px no-repeat,
    linear-gradient(90deg, #eaf0fa, #c5d2ea);
}
.hs {
  flex: none;
  display: flex;
  align-items: center;
  height: 9px;
  background: #eaf1fa;
}
.left {
  margin: 0 5px 0 3px;
  border-left: 0;
  border-right-color: #4c5d86;
}
.right {
  margin: 0 5px;
  border-right: 0;
  border-left-color: #4c5d86;
}
.hthumb {
  width: 71px;
  height: 7px;
  border: 1px solid #8d9cba;
  background:
    linear-gradient(90deg, #7f93ba 0 1px, transparent 1px 3px, #7f93ba 3px) center / 4px 4px no-repeat,
    linear-gradient(#f0f4fb, #c5d2ea);
}
.split {
  width: 4px;
  flex: none;
  display: flex;
  align-items: center;
  background: #9fbbe6;
}
.split i {
  width: 2px;
  height: 17px;
  margin-left: 1px;
  background: repeating-linear-gradient(#4f6ea8 0 1px, #d8e4f6 1px 3px);
}
.panel {
  flex: 1;
  min-width: 0;
  display: flex;
  flex-direction: column;
  overflow: hidden;
  background: #ebf3fb;
  border-top: 1px solid #9bb4d6;
  border-right: 3px solid #a5bfe6;
}
.classic .panel {
  background: #f0f0f0;
  border-right: 0;
  border-color: #9999cc;
}
.tabs {
  flex: none;
  display: flex;
  align-items: center;
  height: 13px;
  padding-left: 14px;
  border-bottom: 1px solid #9bb4d6;
  background: linear-gradient(#d9e7f7, #b6caeb);
  color: #30405a;
}
.classic .tabs {
  height: 14px;
  padding-left: 15px;
  background: linear-gradient(#ccecff 0 8px, #ccccff 8px 11px, #a6caf0 11px);
  border-bottom: 0;
}
.tabs .on {
  align-self: flex-end;
  margin-left: 7px;
  padding: 0 9px;
  height: 11px;
  border: 1px solid #7b97c0;
  border-bottom: 0;
  border-radius: 3px 3px 0 0;
  background: linear-gradient(#c6d9f2, #adc5e8);
}
.classic .tabs .on {
  margin-left: 9px;
}
.bar {
  width: 1px;
  height: 7px;
  margin: 0 8px;
  background: #8fa4c4;
}
.toolbar {
  flex: none;
  height: 13px;
  display: flex;
  align-items: center;
  padding-left: 4px;
  border-bottom: 1px solid #ccd6e6;
  background: linear-gradient(#f8f8fd, #e1e2ef);
}
.classic .toolbar {
  height: 16px;
  border-color: #a6caf0;
  background: linear-gradient(#fafafa, #e6e6e6);
}
.toolset {
  flex: 0 1 572px;
  display: flex;
  align-items: center;
  justify-content: space-between;
}
.classic .toolset {
  flex-basis: 596px;
}
.shot .toolset button {
  flex: none;
  padding: 0 1px;
  line-height: 11px;
}
.shot .toolset .off {
  color: #a9a9ad;
}
.shot .toolset .hot {
  background: #fff0b8;
  box-shadow: 0 0 0 1px #f0c860;
}
.shot.classic .toolset .hot {
  background: #ffffe0;
  box-shadow: none;
}
.toolset .caret {
  margin: 0 0 2px 4px;
}
.filter {
  flex: none;
  display: flex;
  align-items: center;
  height: 23px;
  padding: 0 0 0 5px;
  gap: 15px;
}
.classic .filter {
  height: 22px;
  gap: 17px;
  padding-bottom: 1px;
}
.lookup,
.datebox {
  display: flex;
  align-items: center;
  width: 126px;
  height: 12px;
  padding-right: 2px;
  box-sizing: border-box;
  border: 1px solid #a9a9a9;
  background: #fff;
}
.classic .lookup {
  width: 132px;
}
.lookup input,
.datebox input {
  flex: 1;
  height: 10px;
}
.lookup svg,
.datebox svg {
  width: 8px;
  height: 8px;
}

/* tabel data */
.grid {
  flex: none;
  margin: 0 2px;
  border: 1px solid #808a98;
  background: #fff;
}
.classic .grid {
  margin-right: 0;
  border-right: 0;
}
.dialogued .grid {
  height: 198px;
}
.editing .grid {
  height: 197px;
}
.gridrow {
  display: flex;
}
.gridcol {
  flex: 1;
  min-width: 0;
}
.view {
  height: 185px;
  overflow: hidden;
}
.editing .view {
  height: 174px;
}
.classic .view {
  height: 178px;
}
.data {
  width: 100%;
  height: 190px;
  table-layout: fixed;
  border-collapse: separate;
  border-spacing: 0;
}
.editing .data {
  height: 177px;
}
.classic .data {
  height: 184px;
}
.shot .data.total {
  height: 13px;
}
.data th,
.data td {
  box-sizing: border-box;
  padding: 0 2px;
  overflow: hidden;
  line-height: 10px;
  font-weight: 400;
  border-right: 1px solid #ccd6ea;
  border-bottom: 1px solid #d3dcee;
}
.data th {
  text-align: center;
  border-color: #a9bdd8;
  background: linear-gradient(#f3f7fc, #d5e2f1);
}
.data th.no {
  border-right-color: transparent;
}
.data th.filler {
  border-right: 0;
  border-bottom: 0;
  background: #e0e0e0;
}
.data td.no,
.data td.fix {
  background: #e0e0e0;
  color: #444;
}
.data td.no {
  text-align: center;
  border-right-color: #9db4d6;
}
.data td.blue {
  background: #dcecff;
}
.data td.filler {
  border: 0;
  background: #fff;
}
.data td.num {
  text-align: right;
}
.data td.check {
  text-align: center;
  line-height: 0;
}
.data input[type="checkbox"] {
  appearance: none;
  width: 8px;
  height: 8px;
  box-sizing: border-box;
  border: 1px solid #8a9cb2;
  background: linear-gradient(#f4f8fc, #c4d4ea);
}
.dialogued .active td:not(.filler) {
  background: #fff0c2;
  color: #111;
}
.editing .active td.no,
.editing .active td.fix {
  background: #fff0c2;
  color: #111;
}
.data td.edit {
  border: 1px solid #cf7a34;
  padding: 0;
  background: #ffffdc;
}
.data mark {
  display: inline-block;
  padding: 0 1px;
  background: #2c4484;
  color: #dfe8ff;
}
.shot .data.total td {
  background: #e0e0e0;
  overflow: visible;
  border-right-color: #d2d8e4;
}
.shot .data.total td.filler {
  background: #fff;
}
.classic .data th {
  border-color: #99cccc;
  background: linear-gradient(#fafafa, #e2e2e2);
}
.classic .data th.no {
  border-right-color: transparent;
}
.classic .data td {
  background: #ccecff;
  border-color: #d9d9d9;
}
.classic .data td.no,
.classic .data td.fix {
  background: #e0e0e0;
  border-color: #ccd0d0;
}
.classic .data td.no {
  border-right-color: #99cccc;
}
.classic .data .active td {
  background: #ffffcc;
  color: #111;
}
.classic .data th.cut {
  text-align: left;
  padding-left: 8px;
  border-right: 0;
}
.classic .data td.cut {
  padding-left: 16px;
  border-right: 0;
}
.gvs {
  padding-top: 13px;
}
.gvs .up {
  margin-top: 4px;
}
.gvs .thumb {
  height: 6px;
  margin-top: 5px;
}
.ghs {
  background: #f5f5f0;
}
.ghs .hthumb {
  width: 95px;
}
.ghs .right {
  margin-left: auto;
  margin-right: 14px;
}
.form {
  flex: none;
  display: flex;
  align-items: center;
  height: 35px;
  padding-left: 4px;
}
.datebox {
  width: 64px;
  margin: 0 25px 0 8px;
}
.shot .form textarea {
  box-sizing: border-box;
  width: 312px;
  height: 25px;
  margin-left: 11px;
  border: 1px solid #b4b4b4;
  background: #fff;
  resize: none;
}
.foot {
  flex: 1;
  display: flex;
  align-items: center;
  justify-content: flex-end;
  border-top: 1px solid #9dbbe0;
  border-bottom: 2px solid #7f9fd0;
  background: #d9e7f6;
}
.foot span {
  padding: 0 4px 0 6px;
  border-left: 1px solid #9aa8c0;
}

/* bilah gulir luar layar pertama */
.outer-v {
  display: flex;
  flex-direction: column;
  background: #f4f4ee;
}
.outer-v i,
.outer-h i {
  flex: none;
  width: 9px;
  height: 9px;
  border: 1px solid #b4c4ec;
  background:
    conic-gradient(from 135deg at 50% 30%, #4a6090 90deg, transparent 0) center / 5px 4px no-repeat,
    #c6d4fa;
}
.outer-v .dn {
  margin-top: auto;
  background:
    conic-gradient(from -45deg at 50% 70%, #4a6090 90deg, transparent 0) center / 5px 4px no-repeat,
    #c6d4fa;
}
.outer-v span {
  height: 285px;
  background:
    linear-gradient(#a9bdf0, #a9bdf0) center / 5px 4px no-repeat,
    linear-gradient(90deg, #d0dcfc, #b8cbf8);
}
.outer-h {
  grid-column: 1 / -1;
  display: flex;
  padding-right: 11px;
  background: #f4f4ee;
}
.outer-h i {
  width: 9px;
  height: 8px;
  background:
    conic-gradient(from 45deg at 30% 50%, #4a6090 90deg, transparent 0) center / 4px 5px no-repeat,
    #c6d4fa;
}
.outer-h .rt {
  margin-left: auto;
  background:
    conic-gradient(from 225deg at 70% 50%, #4a6090 90deg, transparent 0) center / 4px 5px no-repeat,
    #c6d4fa;
}
.outer-h span {
  flex: 0 0 91%;
  background:
    linear-gradient(#a9bdf0, #a9bdf0) center / 4px 5px no-repeat,
    linear-gradient(#d0dcfc, #bccefa);
}
.mark {
  position: absolute;
  left: 214px;
  top: 165px;
  width: 60px;
  height: 35px;
  border: 1px solid #f04848;
}
.ime {
  position: absolute;
  right: 11px;
  top: 271px;
  width: 107px;
  height: 13px;
  background: #fbfbfb;
  box-shadow: 0 0 0 1px #d8d8d8;
}
.ime svg {
  display: block;
}
.ime span {
  position: absolute;
  left: 16px;
  top: 1px;
  font-size: 10px;
  color: #3d7fd0;
}

/* kotak dialog */
.dialog {
  position: absolute;
  left: 305px;
  top: 153px;
  width: 253px;
  height: 181px;
  box-sizing: border-box;
  border: 2px solid #1138b8;
  border-top: 0;
  border-radius: 4px 4px 0 0;
  background: #eaf3fb;
}
.dlg-title {
  display: flex;
  align-items: center;
  justify-content: space-between;
  height: 18px;
  margin: 0 -2px;
  padding: 0 3px 0 4px;
  border-radius: 4px 4px 0 0;
  background: linear-gradient(#2f86ff, #0050e0 30%, #0062f5 80%, #0044c8);
  color: #fff;
  font-size: 9px;
  font-weight: 700;
}
.shot .dlg-title button {
  width: 13px;
  height: 13px;
  border: 1px solid #fff;
  border-radius: 2px;
  background: #d8512f;
  line-height: 11px;
}
.dlg-body {
  padding: 8px 82px 0 26px;
}
.dlg-body fieldset {
  min-width: 0;
  margin: 0 0 10px;
  padding: 0 0 0 3px;
  height: 48px;
  box-sizing: border-box;
  border: 1px solid #d3e2ee;
}
.dlg-body legend {
  padding: 0;
}
.dlg-body label {
  display: flex;
  align-items: center;
  gap: 3px;
  height: 18px;
}
.dlg-body legend + label {
  margin-top: -4px;
}
.shot .dlg-body input {
  appearance: none;
  width: 7px;
  height: 7px;
  box-sizing: border-box;
  border: 1px solid #8093a8;
  border-radius: 50%;
  background: #fff;
}
.shot .dlg-body input:checked {
  background: radial-gradient(#222 40%, #fff 55%);
}
.focus {
  outline: 1px dotted #888;
}
.dlg-body p {
  margin: 11px 0 0;
  padding-left: 1px;
}
.dlg-btns {
  display: flex;
  gap: 11px;
  padding: 7px 0 0 69px;
}
.shot .dlg-btns button {
  flex: none;
  width: 26px;
  height: 14px;
  border: 1px solid #7e8ca6;
  background: linear-gradient(#fbfcfe, #ccd6e8);
}
.annot {
  position: absolute;
  left: -2px;
  top: 0;
  width: 253px;
  height: 181px;
}
</style>
